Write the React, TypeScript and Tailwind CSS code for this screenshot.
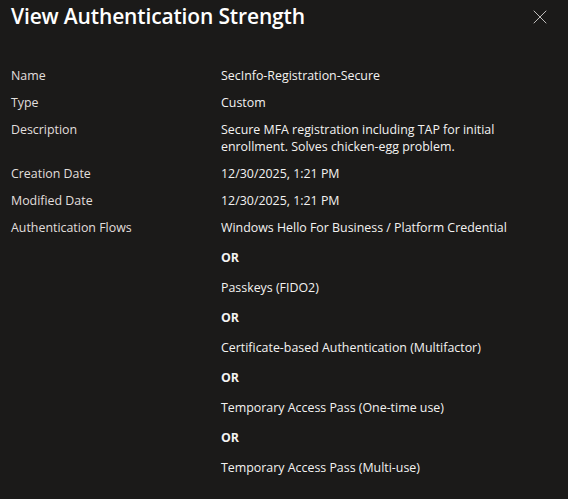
import { X } from "lucide-react"

const rows: [string, string[]][] = [
  ["Name", ["SecInfo-Registration-Secure"]],
  ["Type", ["Custom"]],
  ["Description", ["Secure MFA registration including TAP for initial", "enrollment. Solves chicken-egg problem."]],
  ["Creation Date", ["12/30/2025, 1:21 PM"]],
  ["Modified Date", ["12/30/2025, 1:21 PM"]],
]

const flows = [
  "Windows Hello For Business / Platform Credential",
  "Passkeys (FIDO2)",
  "Certificate-based Authentication (Multifactor)",
  "Temporary Access Pass (One-time use)",
  "Temporary Access Pass (Multi-use)",
]

export default function App() {
  return (
    <div
      className="w-[568px] h-[499px] bg-[#1b1a19] text-[#f3f2f1] overflow-hidden"
      style={{ fontFamily: '"Open Sans", "Noto Sans", sans-serif' }}
    >
      {/* Header */}
      <div className="flex items-start justify-between pl-[11px] pr-[16px] pt-[1px]">
        <h1 className="text-[21px] leading-[30px] font-semibold text-white tracking-[-0.15px]">
          View Authentication Strength
        </h1>
        <button className="mt-[4px] text-[#d2d0ce]">
          <X className="w-[24px] h-[24px]" strokeWidth={0.9} />
        </button>
      </div>

      {/* Details */}
      <div className="mt-[36px] px-[11px] grid grid-cols-[210px_1fr] gap-y-[10px] text-[12.4px] leading-[17px]">
        {rows.map(([label, value]) => (
          <div key={label} className="contents">
            <div className="text-[#e1dfdd]">{label}</div>
            <div>
              {value.map((line) => (
                <div key={line}>{line}</div>
              ))}
            </div>
          </div>
        ))}
        <div className="text-[#e1dfdd]">Authentication Flows</div>
        <div className="flex flex-col gap-[13px]">
          {flows.map((f, i) => (
            <div key={f} className="flex flex-col gap-[13px]">
              {i > 0 && <div className="font-bold">OR</div>}
              <div>{f}</div>
            </div>
          ))}
        </div>
      </div>
    </div>
  )
}
